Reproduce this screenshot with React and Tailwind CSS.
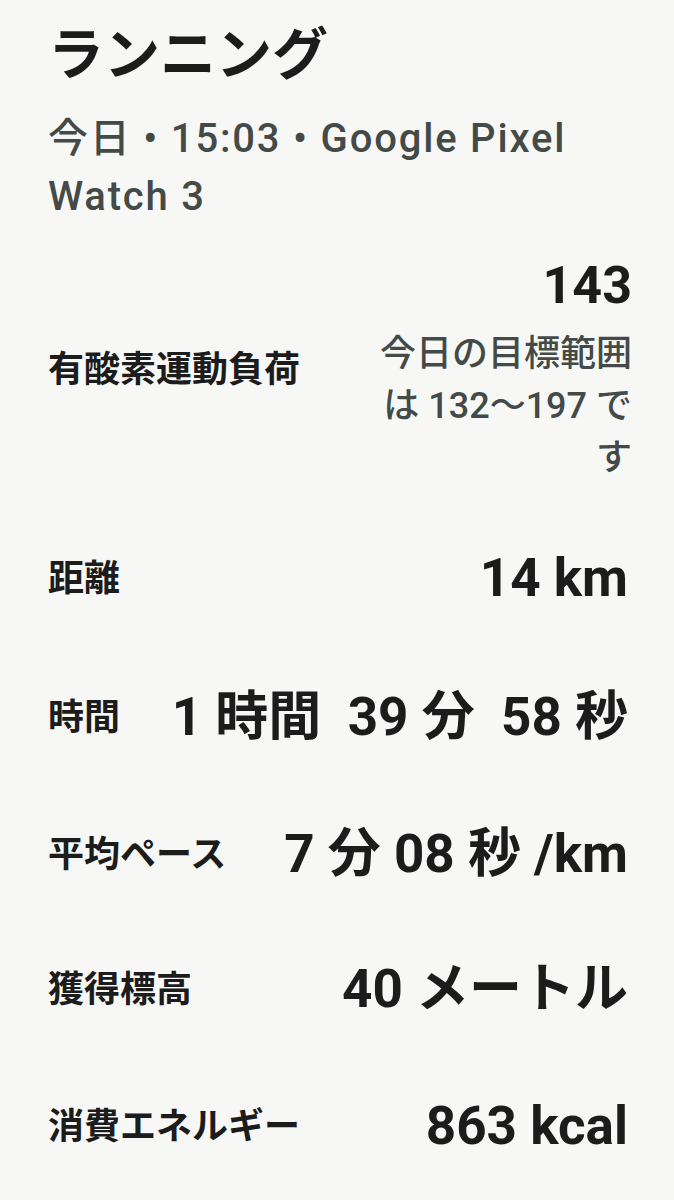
import React from 'react';

const font = { fontFamily: 'Roboto, "Noto Sans CJK JP", sans-serif' };

// row heights follow the uneven spacing of the screenshot
const rows = [
  { label: '距離', value: '14 km', h: 'h-[138px]' },
  { label: '時間', value: '1 時間  39 分  58 秒', h: 'h-[140px]' },
  { label: '平均ペース', value: '7 分 08 秒 /km', h: 'h-[134px]' },
  { label: '獲得標高', value: '40 メートル', h: 'h-[136px]' },
  { label: '消費エネルギー', value: '863 kcal', h: 'h-[137px]' },
];

const App = () => {
  return (
    <div className="min-h-[1200px] w-[674px] bg-[#f7f8f6] pl-12 pr-[42px] text-[#1b1c1b]" style={font}>
      {/* Header */}
      <div className="pt-[20px]">
        <h1 className="text-[56px] font-bold leading-[70px]">ランニング</h1>
        <div className="mt-[20px] pr-[10px] text-[40px] font-medium leading-[58px] tracking-[0.045em] text-[#444a47]">
          今日 • 15:03 • Google Pixel Watch 3
        </div>
      </div>

      {/* Aerobic load */}
      <div className="mt-[30px] flex items-center justify-between">
        <div className="text-[36px] font-bold">有酸素運動負荷</div>
        <div className="flex w-[256px] flex-col items-end text-right">
          <div className="text-[52px] font-bold leading-[60px]">143</div>
          <div className="mt-[12px] text-[36px] font-medium leading-[52px] text-[#444a47]">
            今日の目標範囲は 132〜197 です
          </div>
        </div>
      </div>

      {/* Stats */}
      <div className="mt-[26px] flex flex-col">
        {rows.map((row) => (
          <div key={row.label} className={`flex items-center justify-between ${row.h}`}>
            <div className="text-[36px] font-bold">{row.label}</div>
            <div className="whitespace-pre pr-[4px] text-[53px] font-bold">{row.value}</div>
          </div>
        ))}
      </div>
    </div>
  );
};

export default App;
